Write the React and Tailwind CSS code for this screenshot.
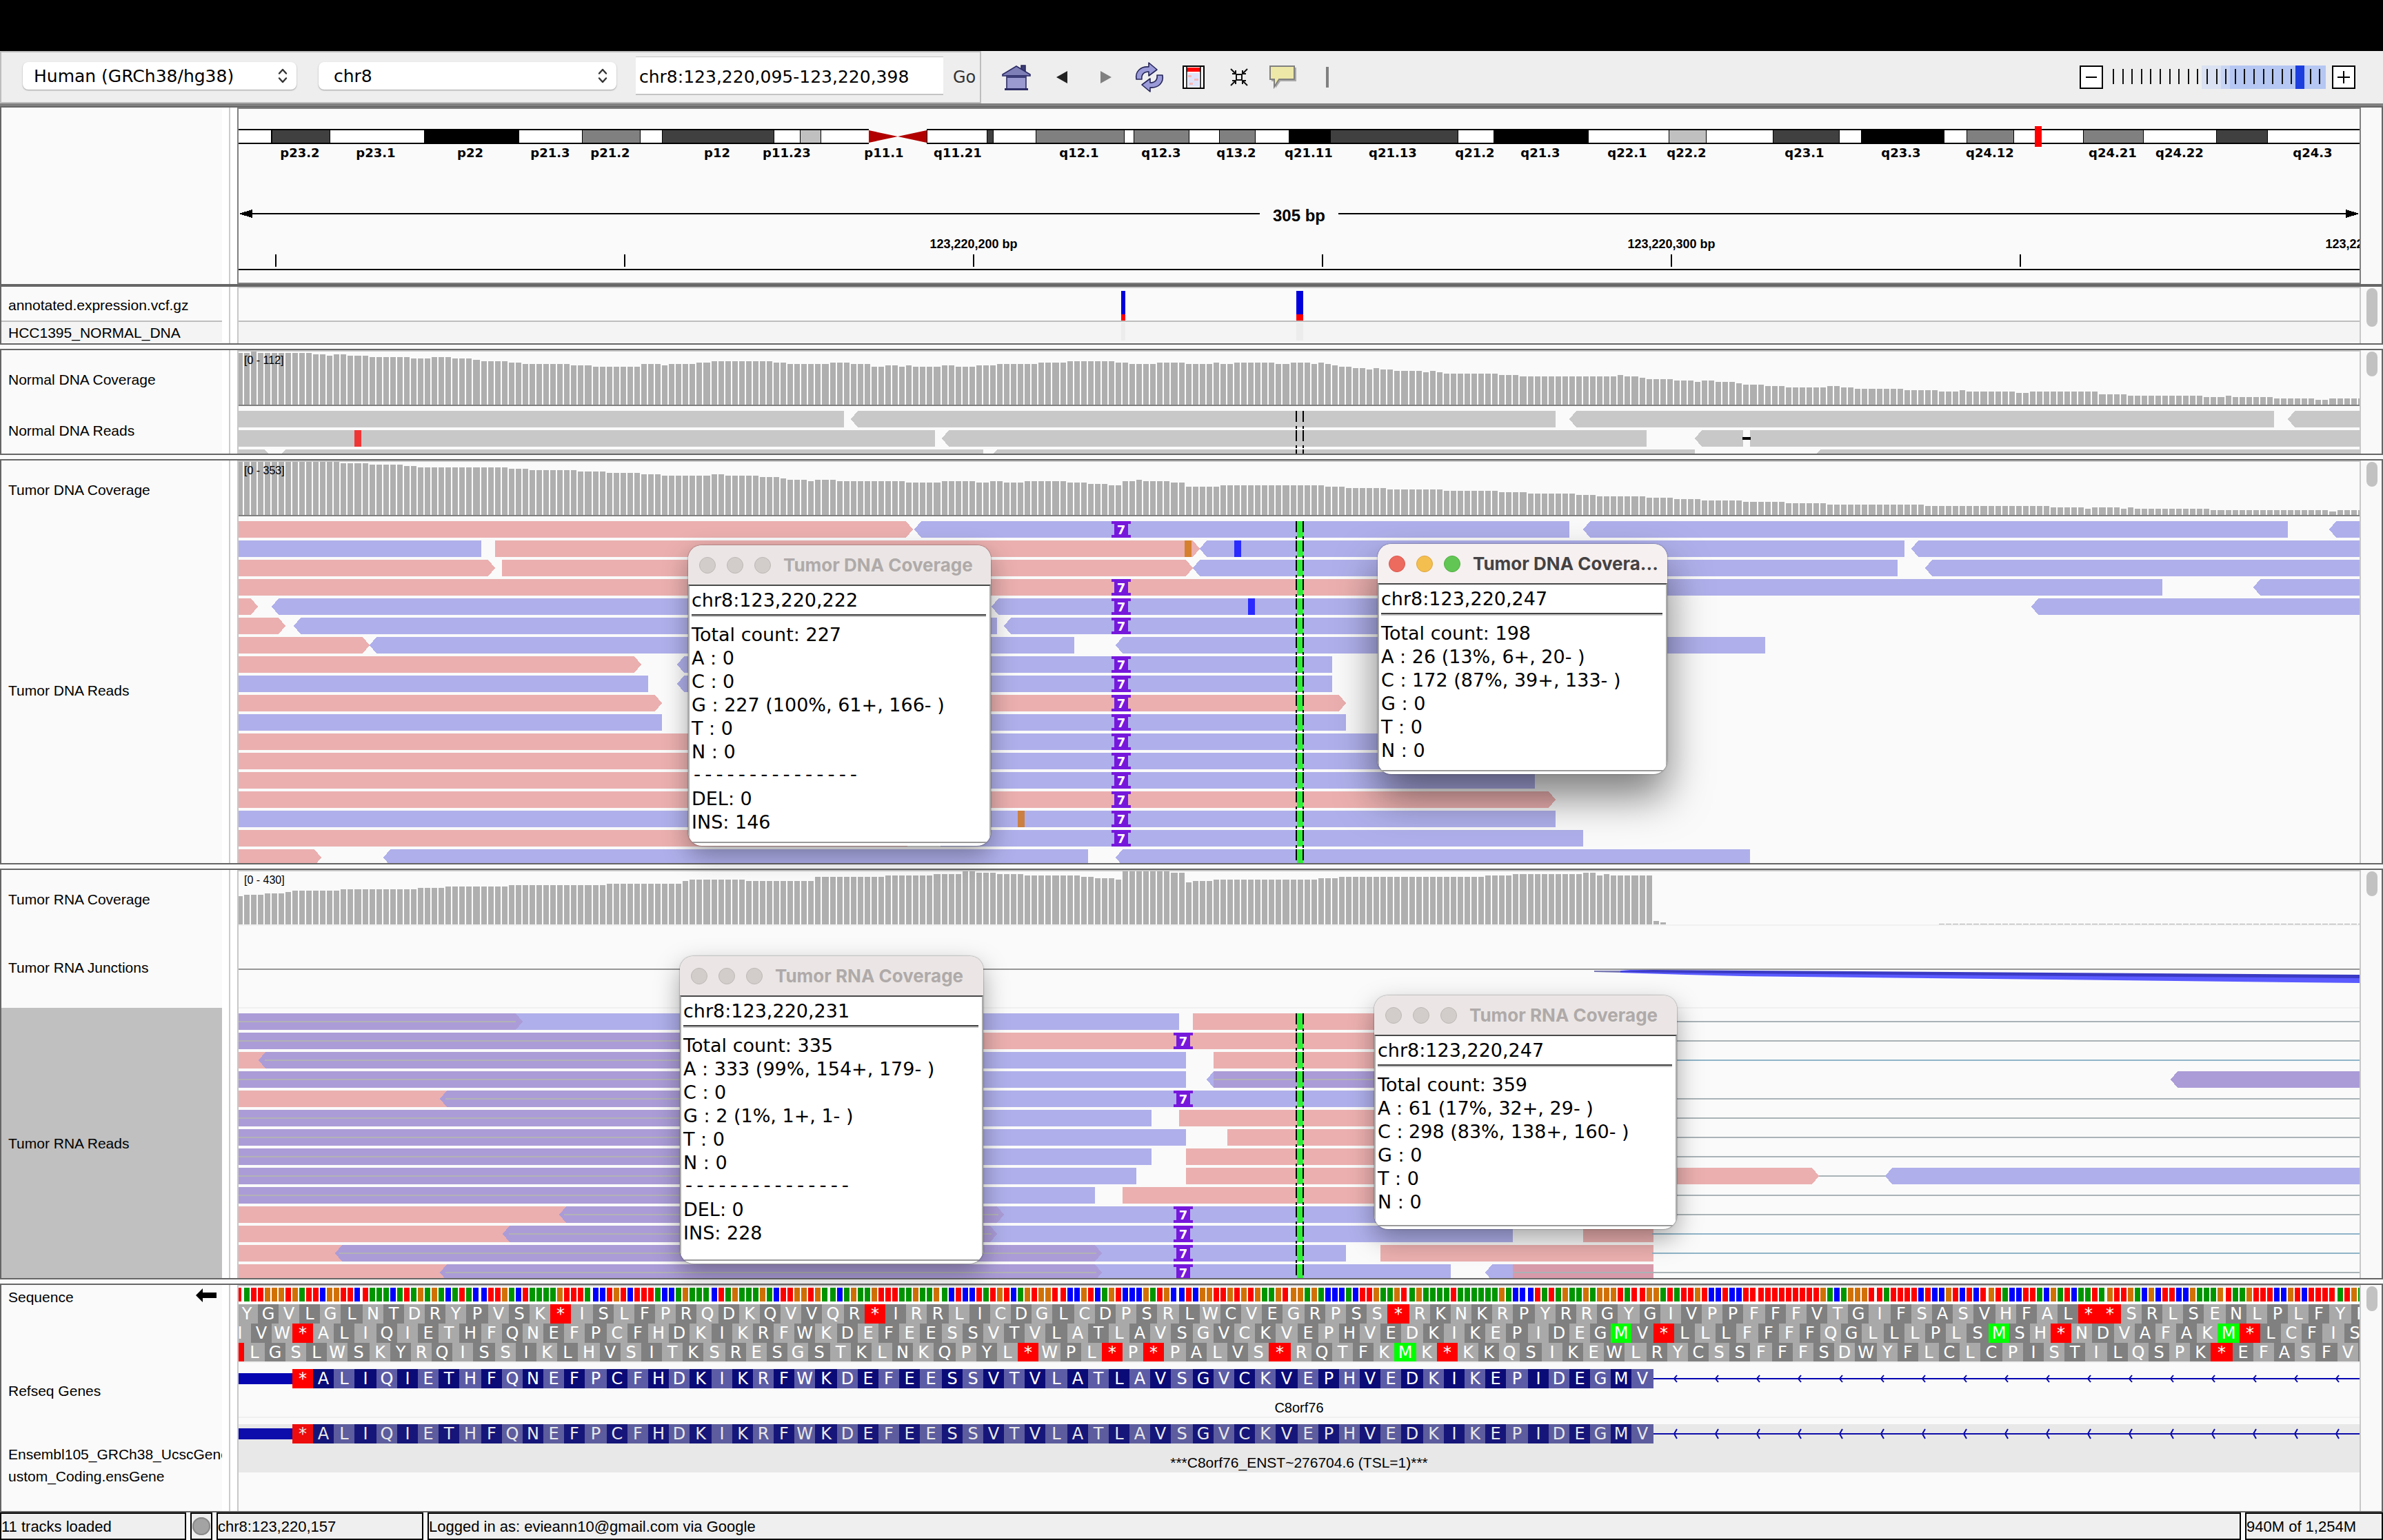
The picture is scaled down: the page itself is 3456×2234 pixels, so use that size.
import React from "react";

const baseX = (i) => 2 * Math.round(5.06 * i - 1.55);
const LAST_BASE = 304;

/* ---------- coverage data: [first base index, bar height] ---------- */

const NORMAL_DNA = [
  [0, 75], [2, 77], [3, 75], [11, 73], [13, 71], [14, 73], [16, 71], [19, 69], [25, 67], [28, 69], [31, 67], [34, 65],
  [35, 63], [39, 61], [41, 59], [48, 57], [51, 55], [58, 59], [61, 57], [62, 59], [66, 61], [68, 63], [77, 61], [79, 59],
  [85, 61], [88, 59], [91, 55], [93, 57], [95, 55], [96, 57], [97, 55], [101, 57], [103, 55], [106, 57], [109, 59],
  [115, 61], [119, 63], [126, 61], [128, 59], [132, 61], [136, 59], [140, 61], [141, 59], [143, 61], [149, 59],
  [151, 61], [154, 59], [155, 61], [156, 59], [157, 57], [158, 55], [160, 53], [162, 51], [163, 53], [164, 51],
  [166, 49], [170, 47], [171, 49], [172, 47], [173, 45], [181, 43], [184, 41], [198, 43], [199, 41], [201, 39],
  [202, 37], [206, 35], [209, 33], [210, 35], [212, 33], [215, 31], [216, 29], [219, 27], [222, 25], [228, 27],
  [230, 25], [232, 23], [239, 21], [244, 19], [247, 21], [248, 19], [255, 17], [257, 19], [267, 15], [271, 13],
  [282, 11], [285, 13], [286, 11], [292, 9], [298, 7], [300, 9],
];

const TUMOR_DNA = [
  [0, 77], [15, 75], [19, 73], [24, 71], [26, 69], [39, 67], [42, 65], [49, 63], [53, 61], [58, 59], [61, 57], [68, 59],
  [70, 57], [75, 55], [78, 53], [79, 51], [82, 49], [83, 51], [86, 49], [96, 47], [101, 49], [106, 47], [108, 49],
  [110, 47], [113, 49], [119, 47], [122, 45], [125, 43], [127, 49], [129, 51], [130, 49], [134, 47], [136, 41],
  [141, 43], [156, 41], [159, 39], [165, 37], [173, 35], [181, 33], [185, 31], [192, 29], [195, 27], [202, 25],
  [206, 23], [210, 21], [216, 19], [222, 17], [228, 15], [242, 13], [260, 11], [265, 9], [266, 11], [270, 9],
  [271, 11], [272, 9], [283, 7], [300, 5], [301, 7],
];

const TUMOR_RNA = [
  [0, 41], [1, 43], [4, 45], [7, 47], [8, 49], [15, 51], [26, 53], [30, 55], [39, 57], [53, 59], [64, 63], [65, 65],
  [73, 63], [83, 69], [93, 71], [100, 73], [104, 77], [106, 75], [109, 73], [113, 71], [121, 69], [123, 67], [126, 65],
  [127, 77], [134, 75], [136, 61], [137, 63], [140, 65], [155, 67], [158, 69], [179, 71], [183, 73], [193, 75],
  [195, 71], [196, 73], [197, 71], [203, 5], [204, 3], [205, 0], [244, 1],
];

/* ---------- reads: [start, end, colour, tips]; x from the data edge ---------- */

const PINK = "#ebafaf";
const BLUE = "#afafeb";
const GRAY = "#c8c8c8";
const PURPLE = "#ab9cd7";
const ROSE = "#d79aaa";
const END = 3076;

const NORMAL_READS = [
  [[0, 878, GRAY], [888, 1910, GRAY, "L"], [1930, 2952, GRAY, "L"], [2972, END, GRAY, "L"]],
  [[0, 1010, GRAY], [1020, 2042, GRAY, "L"], [2112, 2182, GRAY, "L"], [2192, END, GRAY]],
  [[0, 48, GRAY, "R"], [58, 1080, GRAY, "L"], [1090, 2112, GRAY, "L"], [2284, END, GRAY, "L"]],
];

const DNA_READS = [
  [[0, 978, PINK, "R"], [980, 1930, BLUE, "L"], [1950, 2972, BLUE, "L"], [3032, END, BLUE, "L"]],
  [[0, 352, BLUE], [372, 1394, PINK, "R"], [1394, 2416, BLUE, "L"], [2426, END, BLUE, "L"]],
  [[0, 372, PINK, "R"], [382, 1384, PINK, "R"], [1384, 2406, BLUE, "L"], [2446, END, BLUE, "L"]],
  [[0, 1700, PINK], [1720, 2790, BLUE, "L"], [2922, END, BLUE, "L"]],
  [[0, 28, PINK, "R"], [48, 1070, BLUE, "L"], [1092, 1750, BLUE, "L"], [2600, END, BLUE, "L"]],
  [[0, 68, PINK, "R"], [80, 1100, BLUE, "L"], [1110, 1750, BLUE, "L"]],
  [[0, 190, PINK, "R"], [190, 1212, BLUE, "L"], [1272, 2214, BLUE, "L"]],
  [[0, 584, PINK, "R"], [636, 1586, BLUE, "L"]],
  [[0, 594, BLUE], [636, 1586, BLUE, "L"]],
  [[0, 614, PINK, "R"], [700, 1606, PINK, "R"]],
  [[0, 614, BLUE], [700, 1606, BLUE, "L"]],
  [[0, 700, PINK], [720, 1750, BLUE]],
  [[0, 700, PINK], [720, 1750, BLUE]],
  [[0, 700, PINK], [720, 1880, BLUE]],
  [[0, 700, PINK], [720, 1910, PINK, "R"]],
  [[0, 700, BLUE], [720, 1910, BLUE]],
  [[0, 980, PINK, "R"], [1008, 1950, BLUE, "L"]],
  [[0, 120, PINK, "R"], [210, 1232, BLUE, "L"], [1272, 2192, BLUE, "L"]],
];

const RNA_READS = [
  [[0, 1364, BLUE], [0, 412, PURPLE, "R"], [1384, 2052, PINK]],
  [[0, 900, PURPLE], [900, 2052, PINK]],
  [[0, 100, PINK], [29, 900, PURPLE, "L"], [900, 1374, BLUE], [1414, 2052, PINK]],
  [[0, 900, PURPLE], [900, 1374, BLUE], [1404, 1500, BLUE, "L"], [1414, 2052, PURPLE], [2802, END, PURPLE, "L"]],
  [[0, 400, PINK], [292, 900, PURPLE, "L"], [900, 1850, BLUE]],
  [[0, 900, PURPLE], [900, 1324, BLUE], [1364, 2052, PINK]],
  [[0, 900, PURPLE], [900, 1374, BLUE], [1434, 2052, PINK]],
  [[0, 900, PURPLE], [900, 1324, BLUE], [1374, 2052, PINK]],
  [[0, 900, PURPLE], [900, 1302, BLUE], [1374, 2292, PINK, "R"], [2388, END, BLUE, "L"]],
  [[0, 900, PURPLE], [900, 1242, BLUE], [1282, 2052, PINK]],
  [[0, 500, PINK], [900, 1850, BLUE], [465, 1110, PURPLE, "LR"]],
  [[0, 400, PINK], [900, 1848, BLUE], [383, 1100, PURPLE, "LR"], [1950, 2052, PINK]],
  [[0, 200, PINK], [900, 1606, BLUE], [140, 1252, PURPLE, "LR"], [1656, 2052, PINK]],
  [[0, 400, PINK], [900, 1758, BLUE], [292, 1252, PURPLE, "LR"], [1808, 1900, BLUE, "L"], [1848, 2052, ROSE]],
];

/* connector lines: [row, x1, x2, colour] */
const MATE = "#b2b2b6";
const SPLICE = "#a9b3b7";
const SPLICE_BLUE = "#8fb4c8";
const RNA_LINES = [
  [0, 0, 402, MATE], [0, 2052, END, SPLICE],
  [1, 0, 900, MATE], [1, 2052, END, SPLICE],
  [2, 38, 900, MATE], [2, 2052, END, SPLICE_BLUE],
  [3, 0, 900, MATE], [3, 1414, 2052, MATE],
  [4, 300, 900, MATE], [4, 2052, END, SPLICE],
  [5, 0, 900, MATE], [5, 2052, END, SPLICE],
  [6, 0, 900, MATE], [6, 2052, END, SPLICE],
  [7, 0, 900, MATE], [7, 2052, END, SPLICE],
  [8, 0, 900, MATE], [8, 2292, 2388, SPLICE],
  [9, 0, 900, MATE], [9, 2052, END, SPLICE],
  [10, 472, 1102, MATE], [10, 2052, END, SPLICE],
  [11, 392, 1092, MATE], [11, 2050, END, SPLICE_BLUE],
  [12, 146, 1244, MATE], [12, 2050, END, SPLICE_BLUE],
  [13, 300, 1244, MATE], [13, 1848, END, SPLICE],
];

/* ---------- translation frames ---------- */

const FRAME_A = "YGVLGLNTDRYPVSK*ISLFPRQDKQVVQR*IRRLICDGLCDPSRLWCVEGRPSS*RKNKRPYRRGYGIVPPFFFVTGIFSASVHFAL**SRLSENLPLFYK";
const FRAME_B = "IVW*ALIQIETHFQNEFPCFHDKIKRFWKDEFEESSVTVLATLAVSGVCKVEPHVEDKIKEPIDEGMV*LLLFFFFQGLLLPLSMSH*NDVAFAKM*LCFIS";
const FRAME_C = "*LGSLWSKYRQISSIKLHVSITKSRESGSTKLNKQPYL*WPL*P*PALVS*RQTFKMK*KKQSIKEWLRYCSSFFFSDWYFLCLCPISTILQSPK*EFASFV ";
const PROTEIN = FRAME_B.slice(3, 68);

const CODON_BASES = "TCAG";
const CODON_TABLE = "FFLLSSSSYY**CC*WLLLLPPPPHHQQRRRRIIIMTTTTNNKKSSRRVVVVAAAADDEEGGGG";

/* Bases that residue `aa` allows at codon position 0, 1 or 2. */
function allowed(aa, pos) {
  if (!aa || aa === " ") return new Set(CODON_BASES);
  const out = new Set();
  for (let n = 0; n < 64; n++) {
    if (CODON_TABLE[n] === aa) out.add(CODON_BASES[[n >> 4, (n >> 2) & 3, n & 3][pos]]);
  }
  return out;
}

/* Residue whose codon starts at base s (minus strand, read right to left). */
function residueAt(s) {
  const m = ((s % 3) + 3) % 3;
  if (m === 0) return FRAME_A[s / 3];
  if (m === 1) return FRAME_C[(s + 2) / 3];
  return FRAME_B[(s + 1) / 3];
}

const SEQUENCE = Array.from({ length: LAST_BASE + 1 }, (_, p) => {
  const second = allowed(residueAt(p - 1), 1);
  const first = allowed(residueAt(p - 2), 0);
  const third = allowed(residueAt(p), 2);
  return [...second].find((b) => first.has(b) && third.has(b)) || [...second][0];
});

const BASE_COLOR = { A: "#009600", C: "#0000ff", G: "#d17105", T: "#ff0000" };

/* ---------- ideogram ---------- */

const W = "#ffffff";
const K = "#000000";
const D = "#404040";
const M = "#808080";
const L = "#c0c0c0";
const BANDS = [
  [0, W], [48, D], [132, W], [269, K], [406, W], [498, M], [582, W], [614, D], [776, W], [814, L], [844, W], [914, null],
  [998, W], [1085, D], [1094, W], [1156, M], [1284, W], [1298, M], [1378, W], [1422, M], [1474, W], [1523, K], [1583, D],
  [1768, W], [1820, K], [1957, W], [2074, L], [2128, W], [2225, D], [2321, W], [2353, K], [2473, W], [2506, M], [2574, W],
  [2675, M], [2762, W], [2868, D], [2942, W], [3077, null],
];
const BAND_LABELS = [
  ["p23.2", 89], ["p23.1", 199], ["p22", 336], ["p21.3", 452], ["p21.2", 539], ["p12", 694], ["p11.23", 795], ["p11.1", 936],
  ["q11.21", 1043], ["q12.1", 1219], ["q12.3", 1338], ["q13.2", 1447], ["q21.11", 1552], ["q21.13", 1674], ["q21.2", 1793],
  ["q21.3", 1888], ["q22.1", 2014], ["q22.2", 2100], ["q23.1", 2271], ["q23.3", 2411], ["q24.12", 2540], ["q24.21", 2718],
  ["q24.22", 2815], ["q24.3", 3008],
];

function Header() {
  return (
    <svg className="block h-[252px] w-full" shapeRendering="crispEdges">
      <rect x="0" y="29" width="914" height="22" fill="#000" />
      <rect x="998" y="29" width="2078" height="22" fill="#000" />
      {BANDS.slice(0, -1).map(([x, c], i) =>
        c && c !== K ? <rect key={x} x={x + (i ? 1 : 0)} y="31" width={BANDS[i + 1][0] - x - 1} height="18" fill={c} /> : null
      )}
      <path d="M914 31 L956 40 L914 49Z M998 31 L956 40 L998 49Z" fill="#b20000" shapeRendering="auto" />
      <rect x="2605" y="25" width="10" height="30" fill="#ff0000" />
      {BAND_LABELS.map(([t, x]) => (
        <text key={t} x={x} y="70" textAnchor="middle" className="font-['DejaVu_Sans',sans-serif] text-[18px] font-bold">{t}</text>
      ))}
      <path d="M10 152h1471M1595 152h1471" stroke="#000" strokeWidth="2" />
      <path d="M0 152l20 -6v12z M3076 152l-20 -6v12z" fill="#000" />
      <text x="1538" y="163" textAnchor="middle" className="font-['Liberation_Sans',sans-serif] text-[24px] font-bold">305 bp</text>
      {[54, 560, 1066, 1572, 2078, 2584].map((x) => (
        <rect key={x} x={x - 1} y="211" width="2" height="18" fill="#000" />
      ))}
      {[["123,220,200 bp", 1066], ["123,220,300 bp", 2078], ["123,220,400 bp", 3090]].map(([t, x]) => (
        <text key={t} x={x} y="202" textAnchor="middle" className="font-['Liberation_Sans',sans-serif] text-[18px] font-bold">{t}</text>
      ))}
      <rect x="0" y="232" width="100%" height="2" fill="#000" />
    </svg>
  );
}

/* ---------- tracks ---------- */

function Variants() {
  return (
    <svg className="block h-[80px] w-full" shapeRendering="crispEdges">
      <rect y="49" width="100%" height="29" fill="#f4f4f4" />
      <rect x="1280" y="50" width="6" height="26" fill="#ececec" />
      <rect x="1534" y="50" width="10" height="26" fill="#ececec" />
      <rect x="1280" y="4" width="6" height="34" fill="#0000dc" />
      <rect x="1280" y="38" width="6" height="9" fill="#ff0000" />
      <rect x="1534" y="4" width="10" height="34" fill="#0000dc" />
      <rect x="1534" y="38" width="10" height="9" fill="#ff0000" />
      <rect y="47" width="100%" height="2" fill="#bebebe" />
    </svg>
  );
}

function Coverage({ data, range, line }) {
  const bars = [];
  data.forEach(([from, h], n) => {
    const to = n + 1 < data.length ? data[n + 1][0] : LAST_BASE + 1;
    for (let i = from; i < to && h; i++) {
      const x = Math.max(0, baseX(i));
      bars.push(<rect key={i} x={x} y={77 - h} width={baseX(i + 1) - 2 - x} height={h} />);
    }
  });
  return (
    <svg className="block h-[79px] w-full" shapeRendering="crispEdges">
      <g fill="#afafaf">{bars}</g>
      <rect y="77" width="100%" height="2" fill={line} />
      <text x="8" y="18" className="font-['Liberation_Sans',sans-serif] text-[16px]">{range}</text>
    </svg>
  );
}

function Read({ y, seg }) {
  const [a, b, fill, tips = ""] = seg;
  const l = tips.includes("L") ? 10 : 0;
  const r = tips.includes("R") ? 10 : 0;
  return <path d={`M${a + l} ${y}H${b - r}L${b} ${y + 12}L${b - r} ${y + 24}H${a + l}L${a} ${y + 12}Z`} fill={fill} />;
}

function Insertion({ x, y }) {
  return (
    <g>
      <path d={`M${x} ${y}h28v4h-4v16h4v4h-28v-4h4v-16h-4z`} fill="#7618dc" />
      <text x={x + 14} y={y + 19} textAnchor="middle" fill="#fff" className="font-['DejaVu_Sans',sans-serif] text-[18px] font-bold">7</text>
    </g>
  );
}

function Locus({ top, rows, color }) {
  return (
    <g>
      {color && Array.from({ length: rows }, (_, k) => (
        <rect key={k} x="1535" y={top + 28 * k} width="9" height="24" fill={color} />
      ))}
      <path d={`M1534 ${top}v${rows * 28}M1544 ${top}v${rows * 28}`} stroke="#000" strokeWidth="2" strokeDasharray="16 6 4 2" />
    </g>
  );
}

function Reads({ rows, top, height, marks = [], insertions = [], insertX, lines = [], locus, children }) {
  return (
    <svg className="block w-full" height={height} shapeRendering="crispEdges">
      {rows.map((segs, k) => segs.map((s, n) => <Read key={`${k}-${n}`} y={top + 28 * k} seg={s} />))}
      {lines.map(([k, x1, x2, c], n) => (
        <rect key={n} x={x1} y={top + 28 * k + 11} width={x2 - x1} height="2" fill={c} />
      ))}
      {marks.map(([k, x, c], n) => <rect key={n} x={x} y={top + 28 * k} width="10" height="24" fill={c} />)}
      <Locus top={top} rows={rows.length} color={locus} />
      {insertions.map((k) => <Insertion key={k} x={insertX} y={top + 28 * k} />)}
      {children}
    </svg>
  );
}

function Junctions() {
  return (
    <svg className="block h-[120px] w-full">
      <rect y="62" width="100%" height="2" fill="#979797" shapeRendering="crispEdges" />
      <path d="M1966 65H2006V68L1966 67Z" fill="#7a7ab4" />
      <path d="M2004 65L2018 64H2052V66L3076 75V83L2180 73L2100 71L2004 68Z" fill="#5a5aff" />
      <path d="M2004 66L2052 64L3076 71V76L2160 69L2004 67Z" fill="#3a3ac4" />
      <rect y="118" width="100%" height="2" fill="#f0f0f0" shapeRendering="crispEdges" />
    </svg>
  );
}

/* One letter cell per codon, `start` being the first codon's base index. */
function Residues({ residues, start, even, odd, stop, met, text }) {
  return (
    <div className="flex shrink-0" style={{ marginLeft: start < 1 ? baseX(start) : 0 }}>
      {[...residues].map((aa, k) => {
        const s = start + 3 * k;
        const background = aa === "*" ? stop : aa === "M" && met ? met : k % 2 ? odd : even;
        return (
          <span
            key={k}
            className={`flex h-7 shrink-0 items-center justify-center font-['DejaVu_Sans',sans-serif] text-[24px] leading-7 ${text}`}
            style={{ width: baseX(s + 3) - baseX(s), background }}
          >
            {aa}
          </span>
        );
      })}
    </div>
  );
}

const FRAMES = [
  { residues: FRAME_A, start: 0, even: "#a9a9a9", odd: "#808080" },
  { residues: FRAME_B, start: -1, even: "#a9a9a9", odd: "#808080" },
  { residues: FRAME_C, start: -2, even: "#808080", odd: "#a9a9a9" },
];

function Sequence() {
  return (
    <div className="h-[111px] overflow-hidden border-b-2 border-[#f0f0f0] bg-white">
      <svg className="block h-[26px] w-full" shapeRendering="crispEdges">
        {SEQUENCE.map((b, i) => {
          const x = Math.max(0, baseX(i));
          return <rect key={i} x={x} y="2" width={baseX(i) + 8 - x} height="20" fill={BASE_COLOR[b]} />;
        })}
      </svg>
      {FRAMES.map((f) => <Residues key={f.start} {...f} stop="#ff0000" met="#00ff00" text="text-white" />)}
    </div>
  );
}

function GeneRow({ dark, light, utr, stop, text, bg, label, labelSize, tall }) {
  const arrows = Array.from({ length: 17 }, (_, k) => 30 + 60 * k);
  const a = tall ? 7 : 5;
  return (
    <div className={`flex h-[70px] flex-col justify-between ${bg}`}>
      <div className="flex h-7 items-center">
        <div className="h-4 w-[78px] shrink-0" style={{ background: utr }} />
        <Residues residues={PROTEIN} start={8} even={light} odd={dark} stop={stop} text={text} />
        <svg className="block h-7 min-w-0 flex-1">
          <rect y="13" width="100%" height="2" fill={utr} />
          {arrows.map((x) => (
            <path key={x} d={`M${x + 4} ${14 - a}L${x} 14L${x + 4} ${14 + a}`} fill="none" stroke={utr} strokeWidth="2" />
          ))}
        </svg>
      </div>
      <div className={`text-center font-['Liberation_Sans',sans-serif] leading-7 ${labelSize}`}>{label}</div>
    </div>
  );
}

/* ---------- panels ---------- */

function Name({ className = "", children }) {
  return (
    <div className={`flex items-center overflow-hidden pt-[2px] pl-[10px] text-[21px] whitespace-nowrap ${className}`}>
      <span>{children}</span>
    </div>
  );
}

function Panel({ names, children, thumb, edge = "border-[#c8c8c8]", className = "" }) {
  return (
    <section className={`flex border-2 border-[#666] bg-[#fafafa] ${className}`}>
      <div className="flex w-[330px] shrink-0 bg-white">
        <div className="flex w-[320px] flex-col bg-[#fafafa] pt-[2px]">{names}</div>
      </div>
      <div className="w-3 shrink-0 border-l-2 border-[#ccc] bg-white" />
      <div className={`min-w-0 flex-1 overflow-hidden border-x-2 border-t-2 ${edge}`}>{children}</div>
      <div className="w-[30px] shrink-0 bg-[#f9f9f9] pt-[2px] pl-2">
        {thumb && <div className={`w-4 rounded-full bg-[#c2c2c2] ${thumb}`} />}
      </div>
    </section>
  );
}

/* ---------- toolbar ---------- */

function Chevrons() {
  return (
    <svg viewBox="0 0 16 24" className="pointer-events-none absolute right-3 top-2 h-6 w-4" fill="none" stroke="#333" strokeWidth="2.4" strokeLinecap="round" strokeLinejoin="round">
      <path d="M3 8.5 L8 3 L13 8.5 M3 15.5 L8 21 L13 15.5" />
    </svg>
  );
}

function Combo({ label, value, className }) {
  return (
    <div className={`relative h-10 rounded-lg bg-white shadow-[0_1px_2px_rgba(0,0,0,0.35)] ${className}`}>
      <select aria-label={label} defaultValue={value} className="h-full w-full appearance-none bg-transparent pt-[2px] pl-4 text-[25px] outline-none">
        <option>{value}</option>
      </select>
      <Chevrons />
    </div>
  );
}

const btn = "flex h-10 shrink-0 items-center justify-center";

function Toolbar() {
  return (
    <header className="flex h-[76px] items-center bg-[#eeeeee] font-['DejaVu_Sans',sans-serif]">
      <div className="flex h-full w-[1423px] shrink-0 items-center border-2 border-[#bdbdbd] pb-1">
        <Combo label="Genome" value="Human (GRCh38/hg38)" className="ml-[31px] w-[397px]" />
        <Combo label="Chromosome" value="chr8" className="ml-8 w-[432px] pl-[6px]" />
        <input aria-label="Locus" defaultValue="chr8:123,220,095-123,220,398" className="ml-7 h-14 w-[446px] border-t border-b-2 border-[#c4c4c4] bg-white px-[5px] pt-[4px] text-[25px] outline-none" />
        <button className="ml-[14px] pt-[3px] text-[24px] text-[#333]">Go</button>
      </div>
      <button aria-label="Home" className={`${btn} ml-[29px] w-[44px]`}>
        <svg viewBox="0 0 44 40" className="h-10 w-11">
          <path d="M29 8V3h6v9z" fill="#3c3c78" stroke="#26265a" strokeWidth="1.5" />
          <path d="M22 4 L42 16 V18 H2 V16Z" fill="#7f7fb8" stroke="#2c2c66" strokeWidth="1.6" />
          <path d="M8 18H36V37H8Z" fill="#9a9ad0" stroke="#2c2c66" strokeWidth="1.6" />
          <path d="M8 18H36V21H8Z" fill="#3c3c78" />
          <path d="M5 36h34v3h-34z" fill="#2c2c66" />
        </svg>
      </button>
      <button aria-label="Back" className={`${btn} ml-[35px] w-[18px]`}><svg viewBox="0 0 18 20" className="h-5 w-[18px]"><path d="M17 1L1 10L17 19Z" fill="#222" /></svg></button>
      <button aria-label="Forward" className={`${btn} ml-[46px] w-[18px]`}><svg viewBox="0 0 18 20" className="h-5 w-[18px]"><path d="M1 1L17 10L1 19Z" fill="#808080" /></svg></button>
      <button aria-label="Refresh" className={`${btn} ml-[32px] w-[44px]`}>
        <svg viewBox="0 0 44 44" className="h-11 w-11" stroke="#26265a" strokeWidth="1.6" fill="#9a9ad8" strokeLinejoin="round">
          <path d="M3 25C1 14 9 6 21 7V1L33 11L21 20V14C14 14 10 18 11 25Z" />
          <path d="M41 19C43 30 35 38 23 37V43L11 33L23 24V30C30 30 34 26 33 19Z" />
        </svg>
      </button>
      <button aria-label="Region" className={`${btn} ml-[26px] w-[32px]`}>
        <svg viewBox="0 0 32 34" className="h-[34px] w-8">
          <path d="M1 1H31V33H1Z" fill="#fff" stroke="#000" strokeWidth="2" />
          <path d="M6 3H26V9H6Z" fill="#ff0000" />
          <path d="M6 2V32M26 2V32" stroke="#000" strokeWidth="1.5" />
          <path d="M8 11h16v20h-16z" fill="#dfe3fa" />
          <path d="M8 14h5v3h-5zM17 19h6v3h-6zM10 25h5v3h-5z" fill="#f5b9b9" />
        </svg>
      </button>
      <button aria-label="Fit" className={`${btn} ml-9 w-[28px]`}>
        <svg viewBox="0 0 28 28" className="h-7 w-7" fill="none" stroke="#111" strokeWidth="2">
          <path d="M10 10h8v8h-8zM2 2l7 7M26 2l-7 7M2 26l7-7M26 26l-7-7M4 9h5V4M24 9h-5V4M4 19h5v5M24 19h-5v5" />
        </svg>
      </button>
      <button aria-label="Popup behavior" className={`${btn} ml-[30px] w-[40px]`}>
        <svg viewBox="0 0 40 34" className="h-[34px] w-10">
          <path d="M3 3H39V23H16L9 33V23H3Z" fill="#aaa" />
          <path d="M1 1H36V20H14L7 31V20H1Z" fill="#eee8a8" stroke="#808080" strokeWidth="2" />
        </svg>
      </button>
      <div className="ml-[42px] h-[30px] w-1 bg-[#808080]" />
      <div className="mr-[40px] ml-auto flex items-center">
        <button aria-label="Zoom out" className="flex h-[34px] w-[34px] items-center justify-center border-2 border-black bg-white"><span className="h-[2px] w-4 bg-black" /></button>
        <svg className="block h-[34px] w-[332px]" shapeRendering="crispEdges" role="img" aria-label="Zoom level">
          <rect x="143" width="29" height="34" fill="#d9e1f2" />
          <rect x="171" width="14" height="34" fill="#c8d4f3" />
          <rect x="184" width="139" height="34" fill="#b5c7f2" />
          {Array.from({ length: 23 }, (_, k) => <rect key={k} x={14 + Math.round(13.6 * k)} y="5" width="2" height="22" fill="#111" />)}
          <rect x="279" width="13" height="34" fill="#1c3edf" />
        </svg>
        <button aria-label="Zoom in" className="flex h-[34px] w-[34px] items-center justify-center border-2 border-black bg-white">
          <svg viewBox="0 0 18 18" className="h-[18px] w-[18px]"><path d="M0 9h18M9 0v18" stroke="#000" strokeWidth="2" /></svg>
        </button>
      </div>
    </header>
  );
}

/* ---------- floating windows ---------- */

const RULE = "---------------";

const POPUPS = [
  {
    x: 998, y: 791, w: 439, pad: "pb-[11px]", title: "Tumor DNA Coverage", locus: "chr8:123,220,222",
    lines: ["Total count: 227", "A : 0", "C : 0", "G : 227 (100%, 61+, 166- )", "T : 0", "N : 0", RULE, "DEL: 0", "INS: 146"],
  },
  {
    x: 1998, y: 789, w: 420, pad: "pb-[11px]", title: "Tumor DNA Covera...", locus: "chr8:123,220,247", active: true,
    lines: ["Total count: 198", "A : 26 (13%, 6+, 20- )", "C : 172 (87%, 39+, 133- )", "G : 0", "T : 0", "N : 0"],
  },
  {
    x: 986, y: 1387, w: 440, pad: "pb-[21px]", title: "Tumor RNA Coverage", locus: "chr8:123,220,231",
    lines: ["Total count: 335", "A : 333 (99%, 154+, 179- )", "C : 0", "G : 2 (1%, 1+, 1- )", "T : 0", "N : 0", RULE, "DEL: 0", "INS: 228"],
  },
  {
    x: 1993, y: 1444, w: 439, pad: "pb-[16px]", title: "Tumor RNA Coverage", locus: "chr8:123,220,247",
    lines: ["Total count: 359", "A : 61 (17%, 32+, 29- )", "C : 298 (83%, 138+, 160- )", "G : 0", "T : 0", "N : 0"],
  },
];

function Popup({ x, y, w, pad, title, locus, lines, active }) {
  const dots = active
    ? ["border-[#d9564c] bg-[#ed6a5e]", "border-[#dca43b] bg-[#f5bf4f]", "border-[#4fae3f] bg-[#62c655]"]
    : ["border-[#bdb8b6] bg-[#d2cdcb]", "border-[#bdb8b6] bg-[#d2cdcb]", "border-[#bdb8b6] bg-[#d2cdcb]"];
  const shadow = active
    ? "shadow-[0_0_2px_rgba(0,0,0,0.6),0_32px_60px_rgba(0,0,0,0.5)]"
    : "shadow-[0_0_2px_rgba(0,0,0,0.6),0_14px_36px_rgba(0,0,0,0.34)]";
  return (
    <div className={`absolute flex flex-col overflow-hidden rounded-[20px] bg-white ${shadow}`} style={{ left: x, top: y, width: w }}>
      <div className={`flex h-[57px] shrink-0 items-center pl-4 ${active ? "bg-[#f6f0f0]" : "bg-[#ebe6e5]"}`}>
        <div className="flex gap-4">
          {dots.map((d, k) => <button key={k} aria-label={["Close", "Minimize", "Zoom"][k]} className={`h-6 w-6 rounded-full border ${d}`} />)}
        </div>
        <h2 className={`ml-[18px] font-['Inter',sans-serif] text-[26px] font-bold whitespace-nowrap ${active ? "text-[#444243]" : "text-[#afaaa9]"}`}>{title}</h2>
      </div>
      <div className={`mb-[4px] border-x-2 border-t-2 border-b-2 border-x-[#aaa] border-t-[#484848] border-b-[#999] px-[3px] font-['DejaVu_Sans',sans-serif] text-[27px] leading-[34px] text-black ${pad}`}>
        <p className="mt-[4px] whitespace-pre">{locus}</p>
        <div className="mt-[3px] mr-[2px] mb-[9px] h-1 border-t-2 border-b-2 border-t-[#444] border-b-[#c4c4c4]" />
        {lines.map((t, k) => (
          <p key={k} className={`h-[34px] whitespace-pre ${t === RULE ? "font-['Liberation_Mono',monospace]" : ""}`}>{t}</p>
        ))}
      </div>
    </div>
  );
}

function Cell({ className, children }) {
  return <div className={`flex h-10 items-center overflow-hidden border-2 border-black bg-[#efefef] whitespace-nowrap ${className}`}>{children}</div>;
}

export default function App() {
  return (
    <div className="relative min-h-[2234px] overflow-hidden bg-[#fafafa] font-['Liberation_Sans',sans-serif] text-black">
      <div className="h-[74px] bg-black" />
      <Toolbar />
      <div className="h-1 bg-[#808080]" />

      <Panel edge="border-[#808080]"><div className="border-b-2 border-[#808080]"><Header /></div></Panel>

      <Panel
        thumb="h-[56px]"
        names={<>
          <Name className="h-[49px] border-b-2 border-[#bebebe]">annotated.expression.vcf.gz</Name>
          <Name className="h-[29px] bg-[#f4f4f4]">HCC1395_NORMAL_DNA</Name>
        </>}
      ><Variants /></Panel>

      <Panel
        className="mt-[6px]"
        thumb="h-9"
        names={<>
          <Name className="h-[79px]">Normal DNA Coverage</Name>
          <Name className="h-[69px]">Normal DNA Reads</Name>
        </>}
      >
        <Coverage data={NORMAL_DNA} range="[0 - 112]" line="#808080" />
        <Reads rows={NORMAL_READS} top={7} height={69} marks={[[1, 168, "#f03535"]]}>
          <rect x="2181" y="45" width="12" height="4" fill="#000" />
        </Reads>
      </Panel>

      <Panel
        className="mt-[6px]"
        thumb="h-9"
        names={<>
          <Name className="h-[79px]">Tumor DNA Coverage</Name>
          <Name className="h-[503px]">Tumor DNA Reads</Name>
        </>}
      >
        <Coverage data={TUMOR_DNA} range="[0 - 353]" line="#808080" />
        <Reads
          rows={DNA_READS} top={7} height={503} locus="#30ee37"
          insertions={[0, 3, 4, 5, 7, 8, 9, 10, 11, 12, 13, 14, 15, 16]} insertX={1266}
          marks={[[1, 1372, "#d5802f"], [1, 1444, "#2a2aff"], [4, 1464, "#2a2aff"], [15, 1130, "#cb7f41"]]}
        />
      </Panel>

      <Panel
        className="mt-[6px]"
        thumb="h-9"
        names={<>
          <Name className="h-[79px]">Tumor RNA Coverage</Name>
          <Name className="h-[119px]">Tumor RNA Junctions</Name>
          <Name className="h-[392px] bg-[#c0c0c0]">Tumor RNA Reads</Name>
        </>}
      >
        <Coverage data={TUMOR_RNA} range="[0 - 430]" line="#f0f0f0" />
        <Junctions />
        <Reads rows={RNA_READS} top={7} height={391} lines={RNA_LINES} locus="#30ee37" insertions={[1, 4, 10, 11, 12, 13]} insertX={1356} />
      </Panel>

      <Panel
        className="mt-[6px]"
        thumb="h-9"
        names={<>
          <div className="flex h-[111px] items-start justify-between pr-2 pl-[10px] text-[21px]">
            Sequence
            <button aria-label="Flip strand" className="mt-[3px]">
              <svg viewBox="0 0 30 20" className="h-5 w-[30px]"><path d="M0 10L10 0V6H30V14H10V20Z" fill="#000" /></svg>
            </button>
          </div>
          <Name className="h-[80px]">Refseq Genes</Name>
          <Name className="h-[135px] leading-8"><>Ensembl105_GRCh38_UcscGene<br />ustom_Coding.ensGene</></Name>
        </>}
      >
        <Sequence />
        <div className="h-[80px] border-b-2 border-[#f0f0f0] pt-[9px]">
          <GeneRow dark="#0b0b78" light="#5c5ca6" utr="#0505b2" stop="#ff0000" text="text-white" bg="bg-transparent" label="C8orf76" labelSize="text-[20px]" />
        </div>
        <div className="h-[135px] pt-[9px]">
          <GeneRow dark="#16167a" light="#5c5c9e" utr="#0d0dab" stop="#ee0c0c" text="text-[#e8e8e8]" bg="bg-[#e8e8e8]" label="***C8orf76_ENST~276704.6 (TSL=1)***" labelSize="text-[21px]" tall />
        </div>
      </Panel>

      <footer className="flex h-10 gap-[6px] bg-[#fafafa] text-[22px]">
        <Cell className="w-[270px]">11 tracks loaded</Cell>
        <Cell className="w-[32px]">
          <svg viewBox="0 0 28 28" className="h-7 w-7"><circle cx="14" cy="14" r="13" fill="#a3a3a3" /><circle cx="14" cy="14" r="12" fill="none" stroke="#8a8a8a" strokeWidth="2" /></svg>
        </Cell>
        <Cell className="w-[300px]">chr8:123,220,157</Cell>
        <Cell className="min-w-0 flex-1">Logged in as: evieann10@gmail.com via Google</Cell>
        <Cell className="w-[200px]">940M of 1,254M</Cell>
      </footer>

      {POPUPS.map((p) => <Popup key={p.title + p.locus} {...p} />)}
    </div>
  );
}
